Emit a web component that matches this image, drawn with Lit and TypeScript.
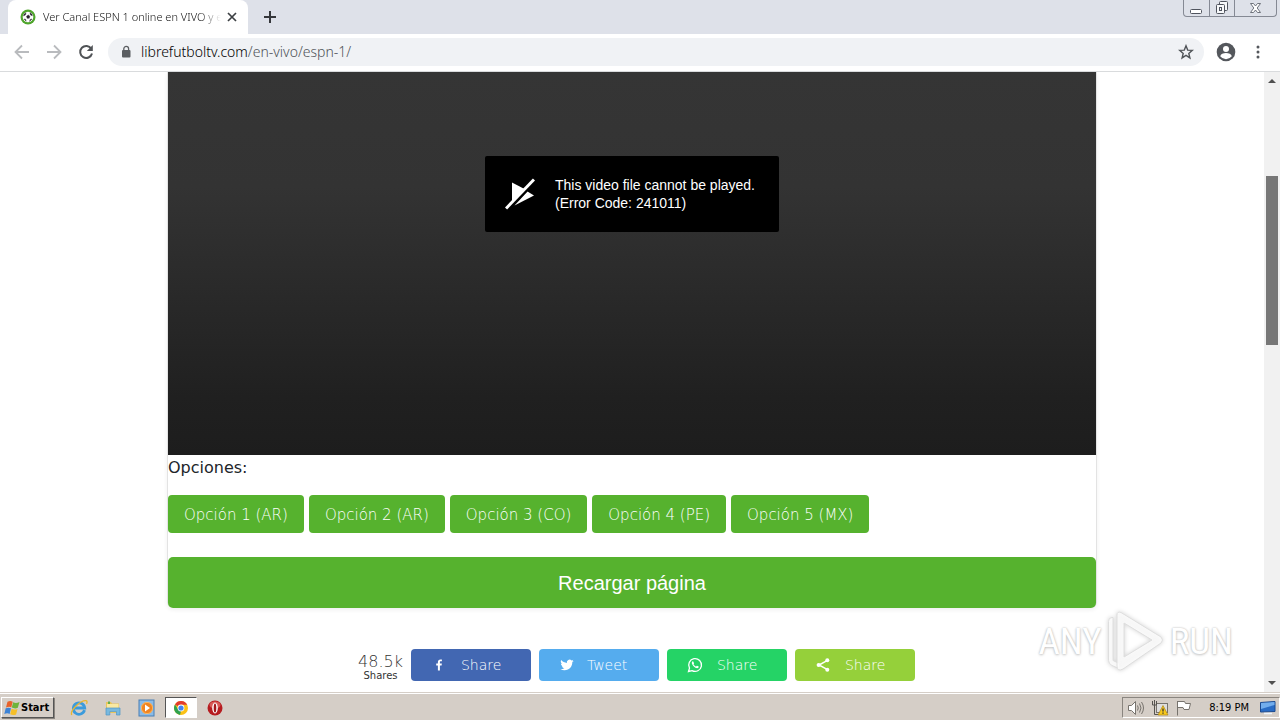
import { LitElement, html, css, svg } from "lit";
import { customElement } from "lit/decorators.js";

const icon = (w: number, h: number, box: string, body: unknown) =>
  html`<svg width=${w} height=${h} viewBox=${box} aria-hidden="true">${body}</svg>`;

const ball = icon(16, 16, "0 0 16 16", svg`
  <circle cx="8" cy="8" r="7.5" fill="#4fa52c"/>
  <circle cx="8" cy="8" r="5.3" fill="#fff"/>
  <path d="M6.5 7.2 8.3 6l1.6 1.3-.7 2H7.1zM4 5.2 6 3.700 5.600 5.800 3.500 7zM10 3.600l2 1.700.3 1.500-1.900-.9zM4 10l1.600.2.6 2zM12 10l-1.800.4-.7 2z" fill="#29202e" stroke="#29202e" stroke-width=".4"/>`);
const back = icon(16, 16, "0 0 16 16", svg`<path d="M15 8H2M8 1.5 1.5 8 8 14.500" fill="none" stroke="#b9bbbe" stroke-width="1.8"/>`);
const forward = icon(16, 16, "0 0 16 16", svg`<path d="M1 8h13M8 1.500 14.500 8 8 14.500" fill="none" stroke="#b9bbbe" stroke-width="1.8"/>`);
const reload = icon(16, 16, "0 0 16 16", svg`<path d="M13.300 4.800A6 6 0 1 0 14 9.500" fill="none" stroke="#505356" stroke-width="2"/><path d="M14.800 1v6H8.800z" fill="#505356"/>`);
const lock = icon(10, 14, "0 0 10 14", svg`<rect x="1" y="5" width="8.500" height="7.500" rx="1" fill="#5b5e62"/><path d="M2.800 5.500V3.800a2.400 2.400 0 0 1 4.800 0v1.700" fill="none" stroke="#5b5e62" stroke-width="1.300"/>`);
const star = icon(16, 16, "0 0 16 16", svg`<path d="m8 1.800 1.700 4.300 4.600.3-3.500 3 1.100 4.500L8 11.400l-3.900 2.500 1.100-4.500-3.500-3 4.600-.3z" fill="none" stroke="#505458" stroke-width="1.400"/>`);
const person = icon(20, 20, "0 0 20 20", svg`<circle cx="10" cy="10" r="9.300" fill="#54575c"/><circle cx="10" cy="7" r="3" fill="#fff"/><path d="M4.200 14.300c.5-2.200 3-3.300 5.800-3.300s5.300 1.100 5.800 3.300a7.300 7.300 0 0 1-11.600 0z" fill="#fff"/>`);
const dots = icon(4, 14, "0 0 4 14", svg`<g fill="#54575c"><circle cx="2" cy="2" r="1.500"/><circle cx="2" cy="7" r="1.500"/><circle cx="2" cy="12" r="1.500"/></g>`);
const closeTab = icon(10, 10, "0 0 10 10", svg`<path d="m1 1 8 8M9 1 1 9" stroke="#3c4043" stroke-width="1.700"/>`);
const plus = icon(12, 12, "0 0 12 12", svg`<path d="M6 0v12M0 6h12" stroke="#35373b" stroke-width="2"/>`);
const minimize = icon(13, 12, "0 0 13 12", svg`<rect x=".5" y="7.500" width="11" height="4" rx="1" fill="#fff" stroke="#50545e"/>`);
const restore = icon(14, 14, "0 0 14 14", svg`<g fill="#f7f8fa" stroke="#50545e"><rect x="4.500" y=".5" width="8" height="9" rx="1"/><rect x="1.500" y="3.500" width="8" height="9" rx="1"/><rect x="4.500" y="6.500" width="2" height="3"/></g>`);
const closeWin = icon(13, 12, "0 0 13 12", svg`<path d="M1.500 1.500h3l2 2.500 2-2.500h3L8.200 6l3.300 4.500h-3l-2-2.500-2 2.500h-3L4.800 6z" fill="#fff" stroke="#60646e" stroke-width=".9"/>`);
const noPlay = icon(30, 32, "0 0 30 32", svg`<path d="M7 4.500v19L19.500 11z" fill="#fff"/><path d="m9.500 27.500 19.500-10-6.500-4z" fill="#fff"/><path d="M2.500 32 30 4" stroke="#000" stroke-width="2"/><path d="M1 30.500 29 1.500" stroke="#fff" stroke-width="3"/>`);

const facebook = icon(16, 16, "0 0 32 32", svg`<path d="M17.800 27V17h3.400l.5-3.900h-3.900v-2.500c0-1.100.3-1.900 2-1.900h2V5.200c-.4 0-1.600-.2-3-.2-3 0-5 1.800-5 5.200v2.900h-3.400V17h3.400v10z" fill="#fff"/>`);
const twitter = icon(16, 16, "0 0 24 24", svg`<path d="M22 5.900c-.7.300-1.500.5-2.400.6.900-.5 1.500-1.300 1.800-2.300-.8.500-1.700.8-2.600 1a4.100 4.100 0 0 0-7 3.700C8.400 8.700 5.400 7.100 3.400 4.600a4.100 4.100 0 0 0 1.300 5.500c-.7 0-1.300-.2-1.900-.5 0 2 1.400 3.700 3.300 4.100-.6.200-1.200.2-1.800.1.500 1.600 2 2.800 3.800 2.800A8.200 8.200 0 0 1 2 18.300 11.600 11.600 0 0 0 8.300 20c7.500 0 11.900-6.300 11.600-12 .8-.6 1.500-1.300 2.100-2.100z" fill="#fff"/>`);
const whatsapp = icon(16, 16, "0 0 16 16", svg`<path d="M1.500 14.500l1-3.400A6.400 6.400 0 1 1 5 13.600z" fill="none" stroke="#fff" stroke-width="1.300"/><path d="M5.700 4.300c-1.600.9-.8 3.200.9 4.900s3.900 2.700 4.900 1.200c.4-.8.200-1-.3-1.200l-1.100-.5c-.4-.2-.6.700-1 .7-.8 0-2.500-1.500-2.500-2.200 0-.3.600-.6.400-1l-.5-1.300c-.2-.5-.4-.7-.8-.6z" fill="#fff"/>`);
const shareThis = icon(16, 16, "0 0 16 16", svg`<path d="M12.500 3.300 4 8l8.500 4.700" fill="none" stroke="#fff" stroke-width="1.500"/><g fill="#fff"><circle cx="12.300" cy="3.300" r="2"/><circle cx="3.700" cy="8" r="2.100"/><circle cx="12.300" cy="12.700" r="2"/></g>`);

const windowsFlag = icon(16, 16, "0 0 16 16", svg`
  <path d="M3.500 1.800c2-1.200 3.500-1.200 5.200 0L7.300 7.300c-1.600-.9-3-.8-5.300.2z" fill="#e8622a"/>
  <path d="M9.200 2.300c2 1 3.700.9 6.300-.3l-1.700 5.800c-2 .9-3.900.8-6-.2z" fill="#6fb43a"/>
  <path d="M1.700 8.300c2-.9 3.500-.9 5.300 0L5.600 13.900c-1.600-.9-3.300-.9-5.300.1z" fill="#3d83d6"/>
  <path d="M7.600 8.800c1.800.9 3.900 1 5.900.1l-1.400 5.500c-2 .9-3.900.8-5.900-.1z" fill="#f6bf28"/>`);
const ie = icon(18, 18, "0 0 18 18", svg`<path d="M14.500 11.200A5.700 5.700 0 1 1 14.700 9H5" fill="none" stroke="#3b9bdc" stroke-width="2.800"/><path d="M1.800 16C-.5 12 10 1.500 16 1.700c1.400.2 1.200 1.900.5 3.100" fill="none" stroke="#e9b62e" stroke-width="1.300"/>`);
const explorer = icon(18, 18, "0 0 18 18", svg`<path d="M2 3h5l1 1.500h7V14H2z" fill="#e9c55c"/><path d="M3 5h11.500v8H3z" fill="#fae9a2"/><path d="M2 9h14v7h-3.500v-3.500H5.800V16H2z" fill="#78b9df" stroke="#4f96c5" stroke-width=".7"/><path d="M4 2.500h2v2.500H4z" fill="#66ad4a"/>`);
const media = icon(18, 18, "0 0 18 18", svg`<rect x="1" y="1" width="15" height="16" fill="#8bbbe6" stroke="#497eb5"/><circle cx="9" cy="9" r="6" fill="#f08421"/><circle cx="9" cy="9" r="5.600" fill="none" stroke="#ffc36d" stroke-width=".8"/><path d="M7 5.500v7l5-3.500z" fill="#fff"/>`);
const chrome = icon(16, 16, "0 0 16 16", svg`<circle cx="8" cy="8" r="7" fill="#fbc116"/><path d="M8 8 2 4.400A7 7 0 0 1 14.200 4.800H8z" fill="#e33b2e"/><path d="M2 4.400 5.400 10 8 11l-1 3.900A7 7 0 0 1 2 4.400z" fill="#2fa24f"/><circle cx="8" cy="8" r="3.400" fill="#fff"/><circle cx="8" cy="8" r="2.600" fill="#4384f0"/>`);
const opera = icon(16, 16, "0 0 16 16", svg`<circle cx="8" cy="8" r="7.500" fill="#b61c20"/><ellipse cx="8" cy="5" rx="5.500" ry="3.500" fill="#d95b58"/><ellipse cx="8" cy="8" rx="2.800" ry="5.400" fill="#fff"/><ellipse cx="8" cy="8" rx="1.300" ry="4.600" fill="#a3171b"/>`);
const sound = icon(18, 16, "0 0 18 16", svg`<path d="M1.500 5.500h3l4-4v13l-4-4h-3z" fill="#fff" stroke="#77736d"/><path d="M10.500 5.500q1.500 2.500 0 5M12.500 3.500q3 4.500 0 9M14.500 2q4 6 0 12" fill="none" stroke="#77736d"/>`);
const network = icon(18, 16, "0 0 18 16", svg`<rect x="5.500" y="3.500" width="11" height="9" fill="#dedede" stroke="#77736d"/><path d="M1.500 1v4h4V1M3.500 0v14.500h5" fill="none" stroke="#55534f"/><path d="m12 5.500 5 9.500H7z" fill="#f8c91c" stroke="#ac8517" stroke-width=".7"/><path d="M12 8.500v3M12 12.500v1.300" stroke="#333" stroke-width="1.300"/>`);
const flag = icon(18, 16, "0 0 18 16", svg`<path d="M2.500 1.500h7l1 2h5l-1.500 6h-5l-1-2h-5.500M2.500 1v14.500" fill="#fff" stroke="#77736d"/>`);
const desktop = icon(16, 14, "0 0 16 14", svg`<path d="M.5 1.500 15 .5v10l-14.500.5z" fill="#296cc5" stroke="#1b4a90"/><path d="M1 2l13.500-1v3L1 8z" fill="#72adec"/><path d="M4 12.500h8" stroke="#eef4fa" stroke-width="1.500"/>`);
const playMark = icon(62, 64, "0 0 62 64", svg`<g fill="#fff" fill-opacity=".8" stroke="#dedede" stroke-width="1">
  <path d="M3.500 11.500q0-4 3.500-4h1v43l6 3v5l-7-3q-3.500-2-3.500-5z"/>
  <path fill-rule="evenodd" d="M12 5q0-4 4-2.500l40 24.500q3 3 0 6L18 59q-6 3-6-3zM19 13v34l28-17z"/></g>`);

const options = ["Opción 1 (AR)", "Opción 2 (AR)", "Opción 3 (CO)", "Opción 4 (PE)", "Opción 5 (MX)"];
const shares = [
  { kind: "facebook", label: "Share", glyph: facebook },
  { kind: "twitter", label: "Tweet", glyph: twitter },
  { kind: "whatsapp", label: "Share", glyph: whatsapp },
  { kind: "sharethis", label: "Share", glyph: shareThis },
];

@customElement("browser-chrome")
class BrowserChrome extends LitElement {
  static styles = css`
    :host { display: block; font-family: "Noto Sans", sans-serif; color: #3c4043; }
    svg { display: block; flex: none; }
    button { border: 0; background: none; padding: 0; display: grid; place-items: center; }
    .strip { display: flex; height: 34px; background: #dee1e9; }
    .tab { display: flex; align-items: center; width: 240px; box-sizing: border-box; margin-left: 8px; padding: 0 11px 0 12px; background: #fff; border-radius: 8px 8px 0 0; }
    .title { flex: 1; min-width: 0; margin-left: 7px; font: 300 11px/16px "Noto Sans", sans-serif; color: #111; white-space: nowrap; mask-image: linear-gradient(90deg, #000 88%, transparent); }
    .tab button { margin-left: 6px; }
    .new { width: 28px; margin-left: 8px; }
    .controls { display: flex; height: 17px; box-sizing: border-box; margin: 0 3px 0 auto; border: 1px solid #858994; border-top: 0; border-radius: 0 0 4px 4px; }
    .controls button { width: 25px; }
    .controls button + button { border-left: 1px solid #858994; }
    .controls button:last-child { width: 42px; }
    .bar { display: flex; align-items: center; height: 35px; padding: 0 20px 2px 14px; border-bottom: 1px solid #d9dbdd; background: #fff; }
    .bar > button + button { margin-left: 16px; }
    .bar > .menu:last-child { margin-left: 20px; }
    .address { flex: 1; display: flex; align-items: center; height: 28px; margin: 0 12px 0 14px; padding: 0 10px 0 13px; border-radius: 14px; background: #f0f2f5; }
    .url { flex: 1; margin-left: 10px; font-size: 14px; line-height: 20px; font-weight: 300; color: #4f5358; }
    .host { color: #000; }
  `;
  render() {
    return html`
      <div class="strip">
        <div class="tab">${ball}<span class="title">Ver Canal ESPN 1 online en VIVO y e</span><button aria-label="Close tab">${closeTab}</button></div>
        <button class="new" aria-label="New tab">${plus}</button>
        <div class="controls"><button aria-label="Minimize">${minimize}</button><button aria-label="Restore">${restore}</button><button aria-label="Close">${closeWin}</button></div>
      </div>
      <div class="bar">
        <button aria-label="Back">${back}</button><button aria-label="Forward">${forward}</button><button aria-label="Reload">${reload}</button>
        <div class="address">${lock}<span class="url"><span class="host">librefutboltv.com</span>/en-vivo/espn-1/</span><button aria-label="Bookmark">${star}</button></div>
        <button aria-label="Profile">${person}</button><button class="menu" aria-label="Menu">${dots}</button>
      </div>`;
  }
}

@customElement("channel-page")
class ChannelPage extends LitElement {
  static styles = css`
    :host { display: block; background: #fff; overflow: hidden; }
    svg { display: block; flex: none; }
    .card { max-width: 928px; margin: 0 auto; border: solid #e3e3e3; border-width: 0 1px; border-radius: 0 0 6px 6px; box-shadow: 0 2px 4px #00000010; }
    .video { display: flex; justify-content: center; align-items: flex-start; height: 383px; box-sizing: border-box; padding-top: 84px; background: linear-gradient(#353535 0%, #333 30%, #202020 85%, #1d1d1d); }
    .error { display: flex; align-items: center; gap: 20px; padding: 20px 24px 20px 20px; background: #000; border-radius: 2px; color: #fff; font: 14px/18px "Liberation Sans", sans-serif; }
    .error p { margin: 0; }
    h2 { margin: 0; padding: 1px 0 15px; font: 16px/24px "DejaVu Sans", sans-serif; color: #212529; }
    .options { display: flex; flex-wrap: wrap; gap: 5px; margin-bottom: 24px; }
    button { border: 0; color: #fff; background: #56b22e; border-radius: 4px; }
    .options button { height: 38px; padding: 2px 16px 0; font: 200 15px/24px "DejaVu Sans", sans-serif; }
    .reload { display: block; width: 100%; height: 51px; border-radius: 5px; font: 20px/30px "Liberation Sans", sans-serif; }
    .shares { display: flex; justify-content: center; gap: 8px; margin-top: 41px; font: 200 14px/16px "DejaVu Sans", sans-serif; }
    .count { padding-left: 9px; text-align: center; color: #333; }
    .count strong { display: block; margin-top: 5px; font: 200 16px/16px "DejaVu Sans", sans-serif; }
    .count span { display: block; font: 10px/12px "DejaVu Sans", sans-serif; }
    .shares button { display: flex; align-items: center; gap: 14px; width: 120px; height: 32px; padding: 0 20px; font: inherit; }
    .shares .facebook { background: #4267b2; }
    .shares .twitter { background: #55acee; gap: 12px; }
    .shares .whatsapp { background: #25d366; }
    .shares .sharethis { background: #95d03a; }
  `;
  render() {
    return html`
      <div class="card">
        <div class="video"><div class="error" role="alert">${noPlay}<p>This video file cannot be played.<br>(Error Code: 241011)</p></div></div>
        <h2>Opciones:</h2>
        <div class="options">${options.map((o) => html`<button>${o}</button>`)}</div>
        <button class="reload">Recargar página</button>
      </div>
      <div class="shares">
        <div class="count"><strong>48.5k</strong><span>Shares</span></div>
        ${shares.map((s) => html`<button class=${s.kind}>${s.glyph}<span>${s.label}</span></button>`)}
      </div>`;
  }
}

@customElement("task-bar")
class TaskBar extends LitElement {
  static styles = css`
    :host { display: flex; align-items: stretch; height: 28px; box-sizing: border-box; padding: 4px 0 2px 1px; background: #d5cec7; border-top: 1px solid #d5cec7; box-shadow: inset 0 1px #fff; font: 11px/14px "DejaVu Sans Condensed", sans-serif; color: #000; }
    svg { display: block; flex: none; }
    button { display: grid; place-items: center; border: 0; padding: 0; background: none; }
    .start { display: flex; align-items: center; gap: 1px; width: 53px; border: 1px solid; border-color: #fff #555 #555 #fff; box-shadow: 1px 1px #8a857f; padding: 0 2px; font: bold 11px/14px "DejaVu Sans Condensed", sans-serif; }
    .apps { display: flex; margin-left: 9px; gap: 2px; }
    .apps button { width: 32px; }
    .apps .active { background: #fff; border: 1px solid; border-color: #555 #fff #fff #555; }
    .tray { display: flex; align-items: center; gap: 6px; margin-left: auto; padding: 0 3px 0 4px; border: 1px solid; border-color: #8a857f #fff #fff #8a857f; }
    .time { margin: 0 5px 0 10px; }
  `;
  render() {
    return html`
      <button class="start">${windowsFlag}<span>Start</span></button>
      <div class="apps">
        <button aria-label="Internet Explorer">${ie}</button><button aria-label="Explorer">${explorer}</button><button aria-label="Media Player">${media}</button><button class="active" aria-label="Chrome">${chrome}</button><button aria-label="Opera">${opera}</button>
      </div>
      <div class="tray">${sound}${network}${flag}<span class="time">8:19 PM</span>${desktop}</div>`;
  }
}

@customElement("app-root")
class AppRoot extends LitElement {
  static styles = css`
    :host { display: flex; flex-direction: column; height: 100vh; overflow: hidden; position: relative; background: #fff; }
    browser-chrome, task-bar { flex: none; }
    .view { flex: 1; min-height: 0; display: flex; }
    channel-page { flex: 1; }
    .scroll { display: flex; flex-direction: column; align-items: center; width: 16px; background: #f1f1f1; }
    .scroll svg { display: block; }
    .track { flex: 1; padding-top: 87px; }
    .thumb { width: 12px; height: 169px; background: #777; }
    .mark { position: absolute; right: 47px; bottom: 46px; display: flex; align-items: center; gap: 3px; font: 37px/64px "Roboto Condensed", "Liberation Sans Narrow", "Liberation Sans", sans-serif; color: #fff; text-shadow: 0 0 2px #bbb, 0 1px 3px #ccc; pointer-events: none; }
    .mark svg { display: block; filter: drop-shadow(0 0 2px #ccc); }
  `;
  render() {
    return html`
      <browser-chrome></browser-chrome>
      <div class="view">
        <channel-page></channel-page>
        <div class="scroll">
          ${icon(16, 17, "0 0 16 17", svg`<path d="M4 11h8L8 7z" fill="#505050"/>`)}
          <div class="track"><div class="thumb"></div></div>
          ${icon(16, 17, "0 0 16 17", svg`<path d="M4 6h8l-4 4z" fill="#505050"/>`)}
        </div>
      </div>
      <task-bar></task-bar>
      <div class="mark"><span>ANY</span>${playMark}<span>RUN</span></div>`;
  }
}
